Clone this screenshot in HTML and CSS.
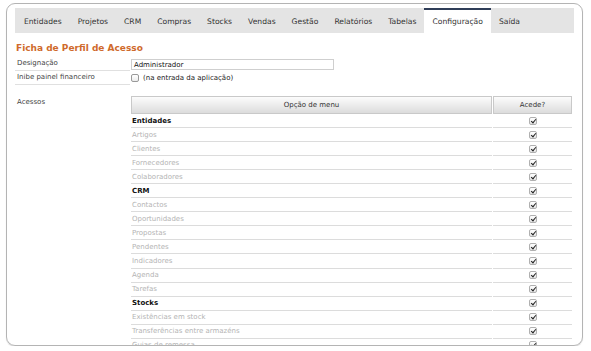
FILE: index.html
```html
<!DOCTYPE html>
<html lang="pt">
<head>
  <meta charset="UTF-8" />
  <title>Ficha de Perfil de Acesso</title>
  <link rel="stylesheet" href="styles.css">
</head>
<body>
  <div class="frame">
    <nav class="tabs">
      <a class="tab">Entidades</a>
      <a class="tab">Projetos</a>
      <a class="tab">CRM</a>
      <a class="tab">Compras</a>
      <a class="tab">Stocks</a>
      <a class="tab">Vendas</a>
      <a class="tab">Gestão</a>
      <a class="tab">Relatórios</a>
      <a class="tab">Tabelas</a>
      <a class="tab active">Configuração</a>
      <a class="tab">Saída</a>
    </nav>

    <h1 class="title">Ficha de Perfil de Acesso</h1>

    <div class="form-row">
      <div class="label">Designação</div>
      <div class="field"><span class="input">Administrador</span></div>
    </div>
    <div class="form-row">
      <div class="label">Inibe painel financeiro</div>
      <div class="field"><span class="box"></span>(na entrada da aplicação)</div>
    </div>

    <div class="form-row access">
      <div class="label plain">Acessos</div>
      <div class="field">
        <table class="menu-table">
          <thead>
            <tr><th>Opção de menu</th><th class="col-check">Acede?</th></tr>
          </thead>
          <tbody>
            <tr class="section"><td>Entidades</td><td class="col-check"><span class="chk"></span></td></tr>
            <tr><td>Artigos</td><td class="col-check"><span class="chk"></span></td></tr>
            <tr><td>Clientes</td><td class="col-check"><span class="chk"></span></td></tr>
            <tr><td>Fornecedores</td><td class="col-check"><span class="chk"></span></td></tr>
            <tr><td>Colaboradores</td><td class="col-check"><span class="chk"></span></td></tr>
            <tr class="section"><td>CRM</td><td class="col-check"><span class="chk"></span></td></tr>
            <tr><td>Contactos</td><td class="col-check"><span class="chk"></span></td></tr>
            <tr><td>Oportunidades</td><td class="col-check"><span class="chk"></span></td></tr>
            <tr><td>Propostas</td><td class="col-check"><span class="chk"></span></td></tr>
            <tr><td>Pendentes</td><td class="col-check"><span class="chk"></span></td></tr>
            <tr><td>Indicadores</td><td class="col-check"><span class="chk"></span></td></tr>
            <tr><td>Agenda</td><td class="col-check"><span class="chk"></span></td></tr>
            <tr><td>Tarefas</td><td class="col-check"><span class="chk"></span></td></tr>
            <tr class="section"><td>Stocks</td><td class="col-check"><span class="chk"></span></td></tr>
            <tr><td>Existências em stock</td><td class="col-check"><span class="chk"></span></td></tr>
            <tr><td>Transferências entre armazéns</td><td class="col-check"><span class="chk"></span></td></tr>
            <tr><td>Guias de remessa</td><td class="col-check"><span class="chk"></span></td></tr>
          </tbody>
        </table>
      </div>
    </div>
  </div>
</body>
</html>
```

FILE: styles.css
```css
/* Reset */
* {
  margin: 0;
  padding: 0;
  box-sizing: border-box;
}

body {
  background: #fff;
  font-family: "DejaVu Sans", Verdana, sans-serif;
  font-size: 7px;
  color: #333;
}

/* Rounded window frame */
.frame {
  margin: 3px 0 0 6px;
  width: 577px;
  height: 343px;
  border: 1px solid #b4b4b4;
  border-radius: 9px;
  padding: 4px 8px 0 8px;
  overflow: hidden;
  box-shadow: 0 1px 1px rgba(0, 0, 0, 0.15);
}

/* Top menu tabs */
.tabs {
  display: flex;
  height: 25px;
  background: #e4e4e4;
  padding-left: 1px;
}
.tab {
  display: flex;
  align-items: center;
  padding: 0 8px;
  color: #333;
  font-size: 7.6px;
  border-top: 2px solid transparent;
}
.tab.active {
  background: #fff;
  border-top-color: #2f3d58;
}

/* Title */
.title {
  margin: 8px 0 0 1px;
  height: 16px;
  font-size: 9px;
  font-weight: bold;
  color: #cf6a2c;
  line-height: 14px;
}

/* Form rows */
.form-row {
  display: grid;
  grid-template-columns: 116px 1fr;
}
.label {
  height: 14px;
  line-height: 13px;
  padding-left: 2px;
  border-bottom: 1px solid #e0e0e0;
  margin-right: 1px;
  color: #444;
}
.label.plain {
  border-bottom: none;
}
.field {
  display: flex;
  align-items: center;
  color: #222;
}
.input {
  display: block;
  width: 203px;
  height: 11px;
  line-height: 10px;
  padding-left: 2px;
  border: 1px solid #cfcfcf;
  color: #111;
}
.box {
  width: 8px;
  height: 8px;
  border: 1px solid #999;
  border-radius: 2px;
  margin-right: 4px;
  background: linear-gradient(#fff, #ececec);
}

/* Access table */
.access {
  margin-top: 11px;
}
.access .field {
  display: block;
}
.menu-table {
  width: 443px;
  border-collapse: separate;
  border-spacing: 1px 0;
  margin-left: -1px;
}
.menu-table th {
  height: 18px;
  font-weight: normal;
  color: #333;
  background: linear-gradient(#fcfcfc, #dcdcdc);
  border: 1px solid #c9c9c9;
  text-align: center;
}
.menu-table td {
  height: 14.06px;
  padding-left: 1px;
  border-bottom: 1px solid #dcdcdc;
  color: #b4b4b4;
}
.menu-table .section td {
  color: #111;
  font-weight: bold;
}
.menu-table .col-check {
  width: 79px;
  text-align: center;
  padding-left: 0;
}

/* Checked checkbox */
.chk {
  display: inline-block;
  position: relative;
  width: 8px;
  height: 8px;
  border: 1px solid #b0b0b0;
  border-radius: 2px;
  background: linear-gradient(#fff, #e6e6e6);
  vertical-align: middle;
}
.chk::after {
  content: "";
  position: absolute;
  left: 2px;
  top: 0;
  width: 2px;
  height: 4px;
  border: solid #222;
  border-width: 0 1px 1px 0;
  transform: rotate(40deg);
}
```
